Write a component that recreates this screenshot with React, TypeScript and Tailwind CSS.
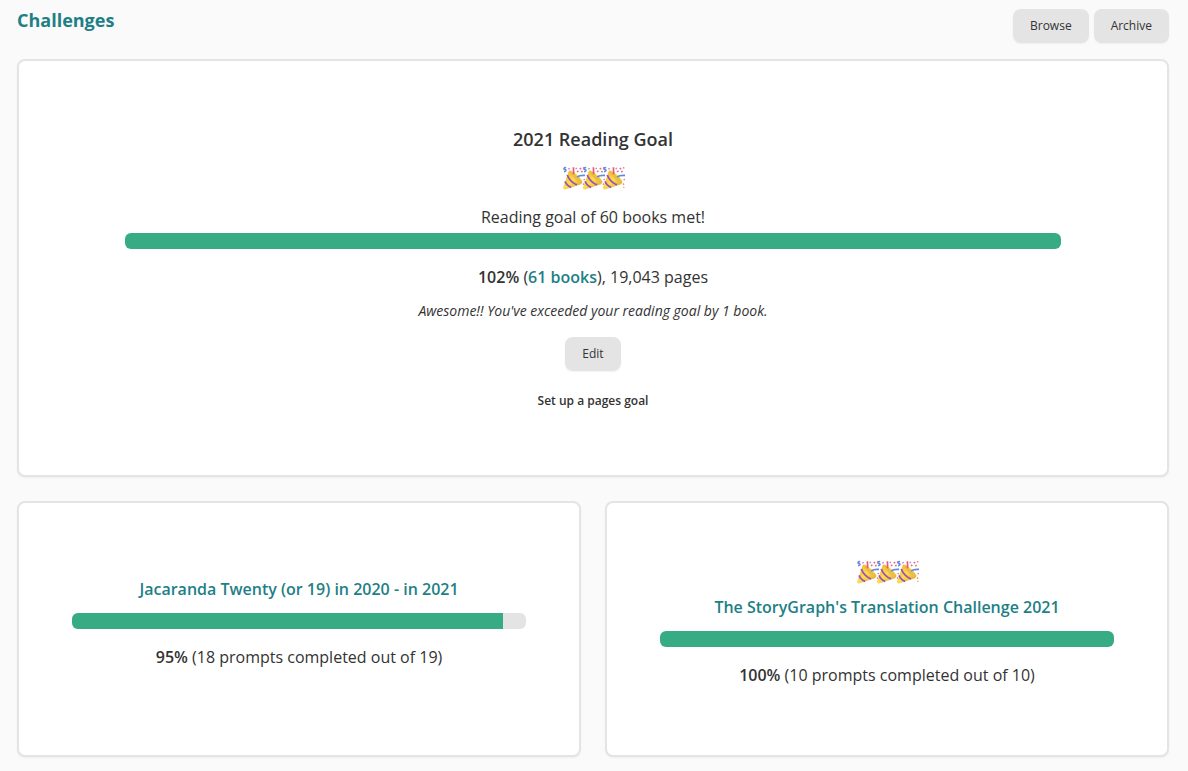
import type { ReactNode } from "react";

function PartyPopper() {
  return (
    <svg viewBox="0 0 24 24" className="h-6 w-6 shrink-0" aria-hidden="true">
      <defs>
        <linearGradient id="cone" x1="0" y1="0" x2="1" y2="1">
          <stop offset="0" stopColor="#e9ab2c" />
          <stop offset="0.5" stopColor="#ffdc4d" />
          <stop offset="1" stopColor="#d39a35" />
        </linearGradient>
      </defs>
      <path d="M7 4.6 C10 4 18 10.5 20.2 15.2 C20.6 16.8 19.6 18 17.5 18.8 L3 23.4 C1.6 23.7 1 22.8 1.2 21.6 Z" fill="url(#cone)" />
      <path d="M8 5.2 C8.6 9 13.6 15.2 18.8 16.4 C19.8 15.2 11.6 5 8 5.2Z" fill="#edbd42" />
      <path d="M5.2 9 C7 13.4 10.4 17 15 18.9" fill="none" stroke="#9a52bd" strokeWidth="1.8" />
      <path d="M3 15.4 C4.3 18.3 6.2 20.4 9.2 21.3" fill="none" stroke="#9a52bd" strokeWidth="1.8" />
      <path d="M11.4 8.2 C12 6.4 11.4 4 11.4 1.2" fill="none" stroke="#ea5a74" strokeWidth="1.7" />
      <path d="M15.2 11 C17 9.4 19.6 9.2 23 9.4" fill="none" stroke="#5b8de6" strokeWidth="1.7" />
      <path d="M4.2 1.5 C1.4 1.4 1.4 3.4 3 3.6 C4.6 3.9 4.3 5.7 2 5.8" fill="none" stroke="#6c8cd8" strokeWidth="1.5" />
      <path d="M15 6 L16.4 4.8 M17.7 2.1 L19.2 3.2 M19.2 6 L20.6 5.2" stroke="#e66b87" strokeWidth="1.6" />
      <path d="M6.3 3.2 L7.7 2.2 M13.7 3 L14.8 1.9" stroke="#b47edb" strokeWidth="1.3" />
      <path d="M21 1.5 L22.4 2.3 M21.6 14.1 L22.8 13.2" stroke="#e66b87" strokeWidth="1.3" />
      <path d="M21 17.5 L22 18.7" stroke="#e7925f" strokeWidth="1.4" />
      <path d="M21.2 21 L22.4 21.7" stroke="#e7ae3f" strokeWidth="1.3" />
    </svg>
  );
}

function Celebration() {
  return (
    <div role="img" aria-label="Goal complete" className="flex justify-center -space-x-1 pt-px pl-px">
      <PartyPopper />
      <PartyPopper />
      <PartyPopper />
    </div>
  );
}

function ProgressBar({ value, label }: { value: number; label: string }) {
  return (
    <div
      role="progressbar"
      aria-label={label}
      aria-valuenow={value}
      aria-valuemin={0}
      aria-valuemax={100}
      className="h-4 w-5/6 overflow-hidden rounded-md bg-[#e4e4e4]"
    >
      <div className="h-full bg-[#37ab84]" style={{ width: `${value}%` }} />
    </div>
  );
}

function Button({ children }: { children: ReactNode }) {
  return (
    <button
      type="button"
      className="rounded-lg bg-[#e4e4e4] px-[17px] py-2 text-xs leading-[18px] text-[#333333] shadow-xs"
    >
      {children}
    </button>
  );
}

type Challenge = { title: string; percent: number; detail: string; done: boolean };

const challenges: Challenge[] = [
  {
    title: "Jacaranda Twenty (or 19) in 2020 - in 2021",
    percent: 95,
    detail: "(18 prompts completed out of 19)",
    done: false,
  },
  {
    title: "The StoryGraph's Translation Challenge 2021",
    percent: 100,
    detail: "(10 prompts completed out of 10)",
    done: true,
  },
];

function ChallengeCard({ title, percent, detail, done }: Challenge) {
  return (
    <article className="flex flex-col items-center justify-center rounded-lg border-2 border-[#e4e4e4] bg-white px-2 py-14 text-center shadow-xs">
      {done && (
        <div className="mb-[11px]">
          <Celebration />
        </div>
      )}
      <h3 className="mb-3 font-semibold">
        <a href="#" className="text-[#1e7f86]">{title}</a>
      </h3>
      <ProgressBar value={percent} label={title} />
      <p className="mt-4 mb-3">
        <span className="font-semibold">{percent}%</span> {detail}
      </p>
    </article>
  );
}

export default function App() {
  return (
    <div className="min-h-screen bg-[#fafafa] pr-[19px] pb-3 pl-[17px] font-['Open_Sans',sans-serif] text-base text-[#333333]">
      <header className="flex items-start justify-between pt-2">
        <h1 className="text-lg leading-6 font-bold text-[#1e7f86]">Challenges</h1>
        <div className="flex gap-[5px] pt-px">
          <Button>Browse</Button>
          <Button>Archive</Button>
        </div>
      </header>

      <main className="mt-4">
        <section className="flex flex-col items-center rounded-lg border-2 border-[#e4e4e4] bg-white px-3 pt-16 pb-[66px] text-center shadow-xs">
          <h2 className="mb-3 text-lg font-semibold">2021 Reading Goal</h2>
          <Celebration />
          <p className="mt-[15px] mb-1">Reading goal of 60 books met!</p>
          <ProgressBar value={100} label="2021 Reading Goal" />
          <p className="mt-4">
            <span className="font-semibold">102%</span> (
            <a href="#" className="font-semibold text-[#1e7f86]">61 books</a>), 19,043 pages
          </p>
          <p className="mt-3 mb-4 text-sm italic">
            Awesome!! You've exceeded your reading goal by 1 book.
          </p>
          <Button>Edit</Button>
          <a href="#" className="mt-[22px] text-xs font-semibold">Set up a pages goal</a>
        </section>

        <div className="mt-6 grid grid-cols-1 gap-6 sm:grid-cols-2">
          {challenges.map((c) => (
            <ChallengeCard key={c.title} {...c} />
          ))}
        </div>
      </main>
    </div>
  );
}
